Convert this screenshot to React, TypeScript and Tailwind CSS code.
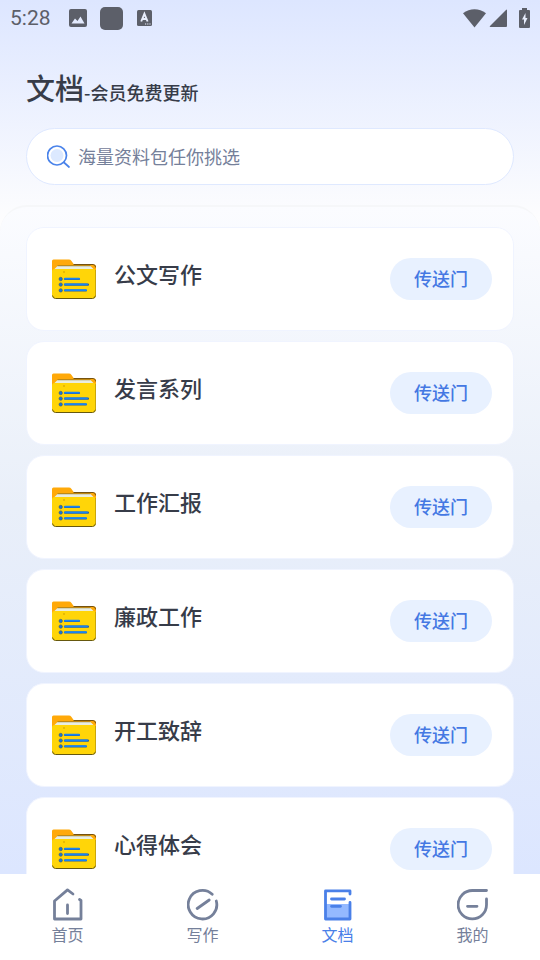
import React from 'react';

const documents = ['公文写作', '发言系列', '工作汇报', '廉政工作', '开工致辞', '心得体会'];

const StatusBar: React.FC = () => (
    <div className="flex h-9 shrink-0 items-center justify-between px-[10px] text-[#5c5f69]">
        <div className="flex items-center">
            <span className="w-[59px] font-['Roboto',sans-serif] text-[21px] leading-9">5:28</span>
            <svg className="h-[18px] w-[18px]" viewBox="0 0 18 18">
                <rect width="18" height="18" rx="2" fill="currentColor" />
                <path d="M2.5 14.5 6 9.5l2.5 2.5 3-4.5 4 7z" fill="#e3eafd" />
            </svg>
            <span className="ml-[13px] h-[23px] w-[23px] rounded-[5px] bg-[#5c5f69]" />
            <svg className="ml-[14px] h-4 w-[15px]" viewBox="0 0 15 16">
                <rect width="15" height="16" rx="1.5" fill="currentColor" />
                <path d="M4.2 11.5 7.4 3.8l3.2 7.7M5.3 9h4.2" fill="none" stroke="#e8eefd" strokeWidth="1.9" />
                <path d="M8 14h1.2M10.2 14h1.2M12.4 14h1.2" stroke="#e8eefd" strokeWidth="1.2" />
            </svg>
        </div>
        <div className="flex items-center">
            <svg className="h-[19px] w-[23px]" viewBox="0 0 23 19">
                <path d="M0 4.2C7 -1 16 -1 23 4.2L11.5 18.5z" fill="currentColor" />
            </svg>
            <svg className="ml-[3px] h-[19px] w-[19px]" viewBox="0 0 19 19">
                <path d="M17 1q1-1 1 .5V17q0 1-1 1H1.5q-1.5 0-.5-1z" fill="currentColor" />
            </svg>
            <svg className="ml-[11px] h-5 w-[11px]" viewBox="0 0 11 20">
                <path d="M3 0h5v2h2q1 0 1 1v16q0 1-1 1H1q-1 0-1-1V3q0-1 1-1h2z" fill="currentColor" />
                <path d="M6.5 5 3 11.5h2V17l3.5-7h-2z" fill="#e8eefd" />
            </svg>
        </div>
    </div>
);

const FolderIcon: React.FC = () => (
    <svg className="h-[40px] w-[44px] shrink-0" viewBox="0 0 44 40" aria-hidden="true">
        <path d="M0 38V2Q0 .5 1.5.5H17q1.500 0 2.300 1.300L22 5.500h20q2 0 2 2V16H0z" fill="#ffa909" />
        <path d="M21.5 5.5H41q2.500 0 2.700 3" fill="none" stroke="#76520d" strokeWidth="1" />
        <path d="M2 10.5 5.500 7h33l3.500 3.500z" fill="#e9eddf" />
        <path d="M5.5 6.800h33" stroke="#665c27" strokeWidth=".6" />
        <path d="M0 12.500q0-2.500 2.500-2.500h39q2.500 0 2.500 2.500V36q0 3.500-3.500 3.500h-37Q0 39.500 0 36z" fill="#ffd508" />
        <path d="M.5 36.500q.5 3 3 3h37q2.500 0 3-3" fill="none" stroke="#66580e" strokeWidth="1" />
        <path d="M43.600 11v26" stroke="#b5930c" strokeWidth=".8" />
        <path d="M11 13h2" stroke="#b98a00" strokeWidth=".7" />
        <g stroke="#2a5f9e" strokeWidth="2.2" strokeLinecap="round">
            <path d="M13 20h14M13 25.700h23M13 31.500h21" />
        </g>
        <g stroke="#1684f5" strokeWidth="1.8" strokeLinecap="round">
            <path d="M13 19.700h14M13 25.300h22M13 31.200h21" />
        </g>
        <g fill="#1674dc" stroke="#405967" strokeWidth=".6">
            <circle cx="8.7" cy="20" r="1.7" />
            <circle cx="8.7" cy="25.6" r="1.7" />
            <circle cx="8.7" cy="31.4" r="1.7" />
        </g>
    </svg>
);

interface DocumentCardProps {
    title: string;
}

const DocumentCard: React.FC<DocumentCardProps> = ({ title }) => (
    <li className="flex h-[104px] shrink-0 items-center rounded-[18px] border border-[#f0f4ff] bg-white pl-[25px] pr-[21px]">
        <FolderIcon />
        <h2 className="ml-[18px] flex-1 pb-3 text-[22px] font-medium leading-8 text-[#373c49]">{title}</h2>
        <button
            type="button"
            className="h-[42px] w-[102px] rounded-full bg-[#e8f1ff] pb-[2px] text-lg font-medium text-[#4478e3]"
        >
            传送门
        </button>
    </li>
);

interface NavItemProps {
    label: string;
    active?: boolean;
    children: React.ReactNode;
}

const NavItem: React.FC<NavItemProps> = ({ label, active, children }) => (
    <a
        href="#"
        aria-current={active ? 'page' : undefined}
        className={`flex flex-1 flex-col items-center pt-[14px] text-base leading-6 ${active ? 'text-[#4a80e8]' : 'text-[#75809a]'}`}
    >
        <svg
            className="mb-px h-[33px] w-8"
            viewBox="0 0 32 33"
            fill="none"
            stroke="currentColor"
            strokeWidth="2.8"
            strokeLinecap="round"
            strokeLinejoin="round"
            aria-hidden="true"
        >
            {children}
        </svg>
        {label}
    </a>
);

const App: React.FC = () => {
    return (
        <div className="flex h-screen flex-col overflow-hidden bg-white font-['Noto_Sans_CJK_SC',sans-serif]">
            <div className="flex min-h-0 flex-1 flex-col bg-linear-to-b from-[#dde6ff] to-[#fdfdfe] to-[220px]">
                <StatusBar />
                <header className="px-[26px] pt-[29px]">
                    <h1 className="text-[29px] font-medium leading-[44px] text-[#373c49]">
                        文档<span className="text-lg">-会员免费更新</span>
                    </h1>
                    <label className="mt-[19px] flex h-[57px] items-center rounded-full border border-[#dfe9ff] bg-white pl-5 pr-6">
                        <svg className="h-6 w-6 shrink-0" viewBox="0 0 24 24" fill="none" aria-hidden="true">
                            <circle cx="10" cy="10.5" r="6.5" fill="#dce9ff" />
                            <circle cx="10" cy="10.5" r="9.5" stroke="#4a83ea" strokeWidth="1.7" />
                            <path d="m17 17.5 5 4.5" stroke="#4a83ea" strokeWidth="1.7" strokeLinecap="round" />
                        </svg>
                        <input
                            type="search"
                            aria-label="搜索资料"
                            placeholder="海量资料包任你挑选"
                            className="ml-[7px] min-w-0 flex-1 bg-transparent pb-[2px] text-lg text-[#75809a] outline-none placeholder:text-[#75809a]"
                        />
                    </label>
                </header>
                <main className="mt-5 min-h-0 flex-1 overflow-hidden rounded-t-[27px] border-t-2 border-[#f6f7f9] bg-linear-to-b from-[#fbfcff] via-[#e9eff9] via-45% to-[#dce6ff] px-[26px] pt-5">
                    <ul className="flex flex-col gap-[10px]">
                        {documents.map((title) => (
                            <DocumentCard key={title} title={title} />
                        ))}
                    </ul>
                </main>
            </div>
            <nav className="flex h-[86px] shrink-0 bg-white">
                <NavItem label="首页">
                    <path d="M21 6l-5.500-4.100L2.500 13v18H29V12.500l-1.500-1M15.500 17v8.500" />
                </NavItem>
                <NavItem label="写作">
                    <path d="M25.200 6.200A14.300 14.300 0 1 0 29.300 13M10.200 20.500l12-8.500" />
                </NavItem>
                <NavItem label="文档" active>
                    <path d="M3 16h25v15H3z" fill="#94b9ff" stroke="none" />
                    <path d="M28 6V2.900H3.500V31H28V14.500M9.500 11h13M9.500 18.300h9" />
                </NavItem>
                <NavItem label="我的">
                    <path d="M29.500 2.500H15.300A14.200 14.200 0 1 0 29.500 16.700V11M10.500 18.300H20" />
                </NavItem>
            </nav>
        </div>
    );
};

export default App;
